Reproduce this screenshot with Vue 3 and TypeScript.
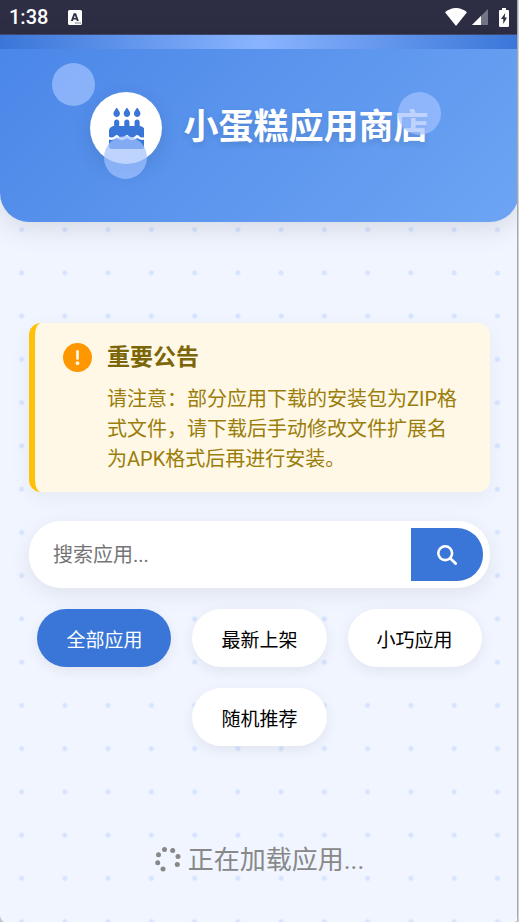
<script setup lang="ts">
import { ref } from 'vue'

const query = ref('')
const filters = ['全部应用', '最新上架', '小巧应用', '随机推荐']
const active = ref(filters[0])
</script>

<template>
  <div class="device">
    <div class="status">
      <span class="clock">1:38</span>
      <svg class="input-icon" viewBox="0 0 14 15" aria-hidden="true">
        <path fill="#fff" fill-rule="evenodd" d="M1.500 0h11a1.500 1.500 0 0 1 1.500 1.500v12a1.500 1.500 0 0 1-1.500 1.500h-11a1.500 1.500 0 0 1-1.500-1.500v-12a1.500 1.500 0 0 1 1.500-1.500zM5.700 3.200L2.900 11h2l.5-1.600h2.900L8.800 11h2L8 3.200zM6.850 5.200L7.800 8H5.900zM7.300 12.500v1h1.200v-1zM9.400 12.500v1h1.200v-1zM11.500 12.500v1h1.200v-1z" />
      </svg>
      <div class="signals">
        <svg width="22" height="18" viewBox="0 0 22 18" aria-hidden="true">
          <path fill="#fff" d="M11 18L0 4.300C3 1.600 6.800 0 11 0s8 1.600 11 4.300z" />
        </svg>
        <svg width="16" height="16" viewBox="0 0 16 16" aria-hidden="true">
          <path fill="#737486" d="M0 16L16 0v16z" />
          <path fill="#fff" d="M0 16l9-9v9z" />
        </svg>
        <svg width="10" height="19" viewBox="0 0 10 19" aria-hidden="true">
          <path fill="#fff" d="M3 0h4v2h2q1 0 1 1v15q0 1-1 1H1q-1 0-1-1V3q0-1 1-1h2z" />
          <path fill="#2d2e44" d="M6.200 5L2 11h2.300v5L8 9.500H5.700z" />
        </svg>
      </div>
    </div>

    <div class="page">
      <header class="hero">
        <div class="logo">
          <svg viewBox="0 0 448 512" aria-hidden="true">
            <path d="M86.400 5.500L61.800 47.600C58 54.100 56 61.600 56 69.200V72c0 22.100 17.900 40 40 40s40-17.900 40-40v-2.800c0-7.600-2-15-5.800-21.600L105.600 5.500C103.600 2.100 100 0 96 0s-7.600 2.100-9.600 5.500zm128 0l-24.600 42.100c-3.800 6.500-5.800 14-5.800 21.600V72c0 22.100 17.900 40 40 40s40-17.900 40-40v-2.800c0-7.600-2-15-5.800-21.600L233.600 5.500C231.600 2.100 228 0 224 0s-7.600 2.100-9.600 5.500zM317.800 47.600c-3.800 6.500-5.800 14-5.800 21.600V72c0 22.100 17.900 40 40 40s40-17.900 40-40v-2.800c0-7.600-2-15-5.800-21.600L361.600 5.500C359.600 2.100 356 0 352 0s-7.600 2.100-9.600 5.500z" />
            <path d="M128 176c0-17.700-14.300-32-32-32s-32 14.300-32 32v48c-35.300 0-64 28.700-64 64v71c8.300 5.200 18.100 9 28.800 9 13.500 0 27.200-6.100 38.400-13.400 7-4.600 12.700-9.300 17.300-13.600 7-7 16-7 24.400.5 3.500 3.700 8.900 8.300 15.600 13.100 10.200 7.100 23 13.100 36.300 13.100s26.100-6 36.300-13.100c6.700-4.700 11.500-8.900 15.700-13.300 6-6.500 16-6.500 22 0 4.200 4.400 9 8.600 15.700 13.300 10.200 7.100 23 13.100 36.300 13.100s26.100-6 36.300-13.100c6.700-4.800 12.100-9.400 15.600-13.100 8-7.500 17-7.500 24.400-.5 4.600 4.300 10.300 9 17.300 13.600 11.200 7.300 24.900 13.400 38.400 13.400 10.700 0 20.500-3.800 28.200-9v-71c0-35.300-28.700-64-64-64v-48c0-17.700-14.300-32-32-32s-32 14.300-32 32v48h-64v-48c0-17.700-14.300-32-32-32s-32 14.300-32 32v48h-64z" />
            <path d="M448 394.600c-8.500 3.300-18.200 5.400-28.800 5.400-22.500 0-42.400-9.900-55.800-18.600-4.100-2.700-7.800-5.400-10.900-7.800-2.800 2.400-6.100 5-9.800 7.500C329.800 390 310.600 400 288 400s-41.800-10-54.600-18.900c-3.500-2.400-6.700-4.900-9.400-7.200-2.700 2.300-5.900 4.700-9.400 7.200C201.800 390 182.600 400 160 400s-41.800-10-54.600-18.900c-3.700-2.600-7-5.200-9.800-7.500-3.100 2.400-6.800 5.100-10.900 7.800C71.200 390.100 51.300 400 28.800 400 18.200 400 8.500 397.900 0 394.600V480c0 17.700 14.300 32 32 32h384c17.700 0 32-14.300 32-32z" />
          </svg>
        </div>
        <h1>小蛋糕应用商店</h1>
        <span class="bubble one"></span>
        <span class="bubble two"></span>
        <span class="bubble three"></span>
      </header>

      <main>
        <section class="notice">
          <svg class="warn" viewBox="0 0 28 28" aria-hidden="true">
            <circle cx="14" cy="14" r="14" fill="#ff9800" />
            <path d="M14 8v7" stroke="#fff8e6" stroke-width="2.600" stroke-linecap="round" />
            <circle cx="14" cy="19.500" r="1.800" fill="#fff8e6" />
          </svg>
          <div>
            <h2>重要公告</h2>
            <p>请注意：部分应用下载的安装包为ZIP格式文件，请下载后手动修改文件扩展名为APK格式后再进行安装。</p>
          </div>
        </section>

        <form class="search" @submit.prevent>
          <input v-model="query" type="text" placeholder="搜索应用..." aria-label="搜索应用" />
          <button type="submit" aria-label="搜索">
            <svg viewBox="0 0 20 20" fill="none" stroke="#fff" aria-hidden="true">
              <circle cx="8.200" cy="8.200" r="6.900" stroke-width="2.600" />
              <path d="M13.200 13.200l5.400 5.400" stroke-width="2.800" stroke-linecap="round" />
            </svg>
          </button>
        </form>

        <nav class="filters">
          <button
            v-for="name in filters"
            :key="name"
            type="button"
            :class="{ active: name === active }"
            @click="active = name"
          >{{ name }}</button>
        </nav>

        <div class="loading">
          <svg viewBox="0 0 26 26" fill="#888" aria-hidden="true">
            <circle cx="9.500" cy="2.500" r="2.500" />
            <circle cx="17.700" cy="3.400" r="2.500" />
            <circle cx="23" cy="9.600" r="2.500" />
            <circle cx="22.300" cy="17.600" r="2.500" />
            <circle cx="8" cy="22" r="2.500" />
            <circle cx="2.700" cy="15.800" r="2.500" />
            <circle cx="3.500" cy="7.800" r="2.500" />
          </svg>
          <span>正在加载应用...</span>
        </div>
      </main>
    </div>
  </div>
</template>

<style>
body {
  margin: 0;
  background: #c4c5c6;
}
</style>

<style scoped>
* {
  box-sizing: border-box;
}
.device {
  position: relative;
  display: flex;
  flex-direction: column;
  min-height: 100vh;
  overflow: hidden;
  border-radius: 0 0 8px 8px;
  font-family: Roboto, "Noto Sans CJK SC", sans-serif;
}
.device::after {
  content: "";
  position: absolute;
  inset: 0 0 0 auto;
  width: 2px;
  background: linear-gradient(90deg, #a9aab0 50%, #d0d0d0 50%);
}
.status {
  display: flex;
  align-items: center;
  height: 35px;
  padding: 0 10px 0 9px;
  background: #2d2e44;
  border-bottom: 1px solid #424b70;
  color: #fff;
}
.clock {
  font-size: 20px;
  font-weight: 500;
  line-height: 36px;
}
.input-icon {
  width: 14px;
  height: 15px;
  margin-left: 20px;
}
.signals {
  display: flex;
  align-items: center;
  gap: 5px;
  margin-left: auto;
}
.signals svg:last-child {
  margin-left: 6px;
}
.page {
  flex: 1;
  background: radial-gradient(circle, #d6e4ff 2px, transparent 3px) 0 0 / calc(100vw / 12) calc(100vw / 12) #f0f5ff;
}
.hero {
  position: relative;
  display: flex;
  align-items: center;
  justify-content: center;
  gap: 21px;
  padding: 57px 20px 58px;
  background: linear-gradient(135deg, #4a86e8, #6da5f3);
  border-radius: 0 0 29px 29px;
  box-shadow: 0 6px 29px rgba(0, 0, 0, 0.12);
}
.hero::before {
  content: "";
  position: absolute;
  inset: 0 0 auto;
  height: 14px;
  background: linear-gradient(90deg, #3a76d8, #8ab4ff, #3a76d8);
}
.logo {
  display: flex;
  align-items: center;
  justify-content: center;
  width: 72px;
  height: 72px;
  border-radius: 50%;
  background: #fff;
  box-shadow: 0 6px 20px rgba(0, 0, 0, 0.1);
}
.logo svg {
  height: 41px;
  fill: #3a76d8;
}
h1 {
  margin: 0;
  color: #fff;
  font-size: 35px;
  font-weight: 700;
  line-height: 48px;
  text-shadow: 0 3px 6px rgba(0, 0, 0, 0.12);
}
.bubble {
  position: absolute;
  width: 43px;
  height: 43px;
  border-radius: 50%;
  background: #a3c2ff;
  opacity: 0.7;
}
.one {
  top: 28px;
  left: 10%;
}
.two {
  top: 101px;
  left: 20%;
}
.three {
  top: 57px;
  right: 15%;
}
main {
  padding: 101px 29px 44px;
}
.notice {
  display: flex;
  gap: 15px;
  padding: 19px 24px 18px 28px;
  border-left: 6px solid #ffc107;
  border-radius: 12px;
  background: #fff8e6;
  box-shadow: 0 6px 22px rgba(0, 0, 0, 0.05);
}
.warn {
  flex: none;
  width: 29px;
  height: 29px;
  margin-top: 1px;
}
h2 {
  margin: 0 0 10px;
  color: #7d6608;
  font-size: 23px;
  font-weight: 700;
  line-height: 32px;
}
.notice p {
  margin: 0;
  color: #9a7d0a;
  font-size: 20px;
  line-height: 30px;
}
.search {
  display: flex;
  margin-top: 29px;
  padding: 7px;
  border-radius: 32px;
  background: #fff;
  box-shadow: 0 6px 22px rgba(0, 0, 0, 0.08);
}
.search input {
  flex: 1;
  min-width: 0;
  padding: 0 17px;
  border: 0;
  outline: 0;
  background: transparent;
  color: #333;
  font: 20px Roboto, "Noto Sans CJK SC", sans-serif;
}
.search input::placeholder {
  color: #757575;
}
.search button {
  display: flex;
  align-items: center;
  justify-content: center;
  width: 72px;
  height: 53px;
  padding: 0;
  border: 0;
  border-radius: 0 26px 26px 0;
  background: #3a76d8;
}
.search svg {
  width: 20px;
  height: 20px;
}
.filters {
  display: flex;
  flex-wrap: wrap;
  justify-content: center;
  gap: 21px;
  margin-top: 21px;
}
.filters button {
  height: 58px;
  padding: 0 29px;
  border: 0;
  border-radius: 29px;
  background: #fff;
  box-shadow: 0 4px 14px rgba(0, 0, 0, 0.07);
  color: #000;
  font: 19px Roboto, "Noto Sans CJK SC", sans-serif;
}
.filters button.active {
  background: #3a76d8;
  color: #fff;
}
.loading {
  display: flex;
  align-items: center;
  justify-content: center;
  gap: 7px;
  margin-top: 95px;
  color: #888;
  font-size: 26px;
  line-height: 38px;
}
.loading svg {
  width: 26px;
  height: 26px;
}
</style>
